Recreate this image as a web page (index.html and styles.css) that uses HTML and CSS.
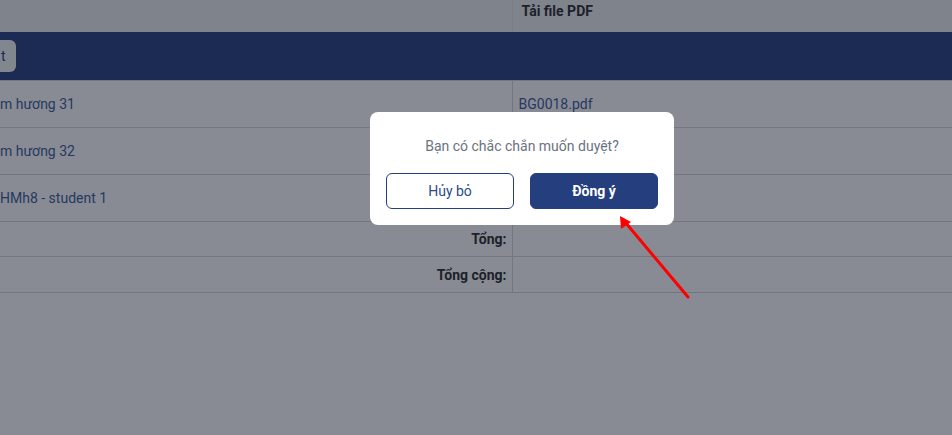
FILE: index.html
```html
<!DOCTYPE html>
<html lang="vi">
<head>
<meta charset="utf-8">
<title>Duyệt</title>
<link rel="stylesheet" href="styles.css">
</head>
<body>
<div class="page">
  <table class="grid">
    <colgroup><col class="c1"><col class="c2"></colgroup>
    <thead>
      <tr class="head"><th></th><th class="th-pdf">Tải file PDF</th></tr>
    </thead>
    <tbody>
      <tr class="band"><td colspan="2"><span class="band-btn">t</span></td></tr>
      <tr class="row"><td class="name">m hương 31</td><td class="file">BG0018.pdf</td></tr>
      <tr class="row"><td class="name">m hương 32</td><td class="file"></td></tr>
      <tr class="row"><td class="name">HMh8 - student 1</td><td class="file"></td></tr>
      <tr class="total"><td class="lbl">Tổng:</td><td></td></tr>
      <tr class="total last"><td class="lbl">Tổng cộng:</td><td></td></tr>
    </tbody>
  </table>
</div>

<div class="overlay">
  <div class="modal">
    <p class="msg">Bạn có chắc chắn muốn duyệt?</p>
    <div class="actions">
      <button class="btn btn-cancel">Hủy bỏ</button>
      <button class="btn btn-ok">Đồng ý</button>
    </div>
  </div>
  <svg class="arrow" width="952" height="435" viewBox="0 0 952 435">
    <line x1="688" y1="297" x2="625" y2="222" stroke="#ff0000" stroke-width="3" stroke-linecap="round"/>
    <polygon points="620,216 621,229 631,222" fill="#ff0000"/>
  </svg>
</div>
</body>
</html>
```

FILE: styles.css
```css
html, body {
  margin: 0;
  padding: 0;
  background: #ffffff;
  font-family: Roboto, "Liberation Sans", Arial, sans-serif;
  font-size: 14px;
  color: #2b2b2b;
}

.page {
  width: 952px;
  height: 435px;
  overflow: hidden;
}

.grid {
  border-collapse: collapse;
  width: 952px;
  table-layout: fixed;
}

.c1 { width: 512px; }
.c2 { width: 440px; }

.head th {
  height: 16px;
  line-height: 16px;
  padding: 3px 0 13px 9px;
  background: #edeef1;
  text-align: left;
  font-weight: 700;
  color: #2b2b2b;
  vertical-align: top;
}

.head th:first-child {
  border-right: 1px solid #e2e3e7;
}

.band td {
  height: 48px;
  padding: 0;
  background: #243e7e;
  border-bottom: 1px solid #d5d4d7;
}

.band-btn {
  display: flex;
  align-items: center;
  width: 32px;
  height: 32px;
  margin-left: -16px;
  padding-left: 17px;
  box-sizing: border-box;
  background: #f3f4f6;
  border-radius: 6px;
  color: #243e7e;
  font-size: 14px;
}

.row td {
  height: 45px;
  padding: 0 0 1px;
  border-bottom: 1px solid #d5d4d7;
  vertical-align: middle;
  color: #3a5a9a;
}

.row td.name {
  padding-left: 0;
  border-right: 1px solid #d5d4d7;
}

.row td.file {
  padding-left: 6px;
}

.total td {
  height: 34px;
  padding: 0;
  border-bottom: 1px solid #d5d4d7;
  vertical-align: middle;
}

.total.last td {
  height: 35px;
}

.total td.lbl {
  text-align: right;
  padding-right: 5px;
  font-weight: 700;
  color: #2b2b2b;
  border-right: 1px solid #d5d4d7;
}

.overlay {
  position: fixed;
  inset: 0;
  background: rgba(17, 24, 39, 0.5);
}

.modal {
  position: absolute;
  left: 370px;
  top: 112px;
  width: 304px;
  box-sizing: border-box;
  padding: 24px 16px 16px;
  background: #ffffff;
  border-radius: 8px;
}

.msg {
  margin: 0 0 17px;
  line-height: 20px;
  text-align: center;
  color: #6b7280;
  font-size: 14px;
}

.actions {
  display: flex;
  gap: 16px;
}

.btn {
  flex: 1;
  height: 36px;
  border-radius: 6px;
  font-family: Roboto, "Liberation Sans", Arial, sans-serif;
  font-size: 14px;
  cursor: pointer;
}

.btn-cancel {
  background: #ffffff;
  border: 1px solid #243e7e;
  color: #2d4a8a;
}

.btn-ok {
  background: #243e7e;
  border: 1px solid #243e7e;
  color: #ffffff;
  font-weight: 700;
}

.arrow {
  position: absolute;
  left: 0;
  top: 0;
  pointer-events: none;
}
```
